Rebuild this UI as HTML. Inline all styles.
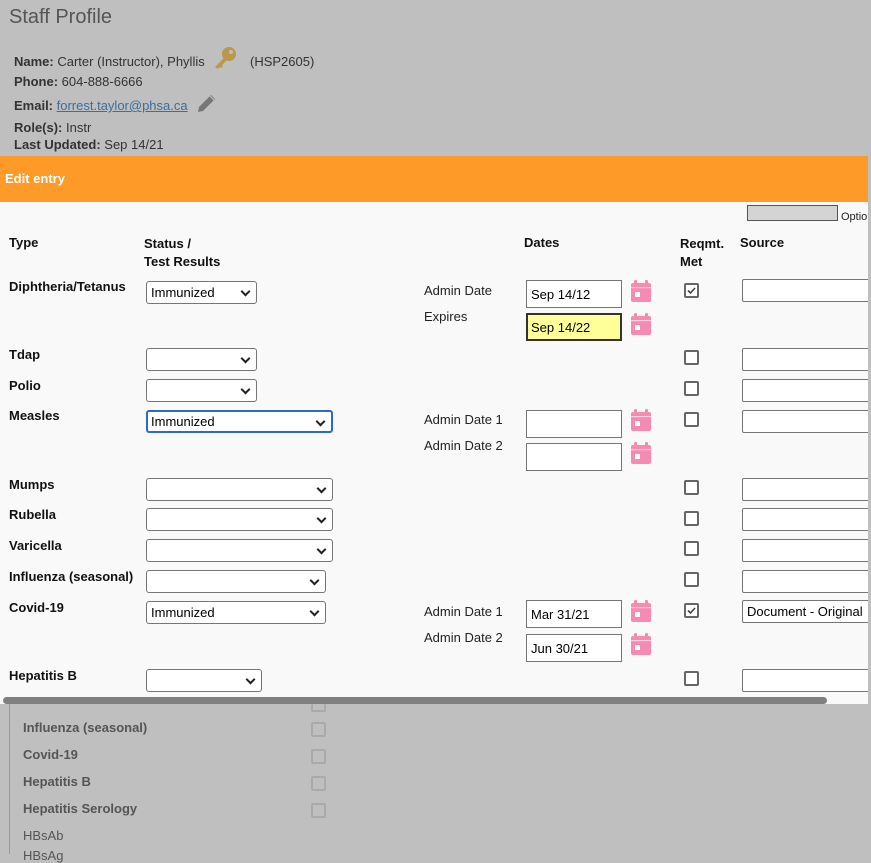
<!DOCTYPE html>
<html><head><style>
*{margin:0;padding:0;box-sizing:border-box}
body{width:871px;height:854px;overflow:hidden;background:#bfbfbf;font-family:"Liberation Sans",Arial,sans-serif;position:relative;color:#333}
.a{position:absolute;white-space:nowrap}
.t{font-size:13px}
.b{font-weight:bold;color:#111}
.sel{position:absolute;height:23px;background:#fff;border:1px solid #767676;border-radius:3px;font-size:13px;color:#000;padding:3px 4px;overflow:hidden}
.sel:after{content:"";position:absolute;right:7px;top:6px;width:5px;height:5px;border-right:2px solid #222;border-bottom:2px solid #222;transform:rotate(45deg)}
.src{position:absolute;left:742px;width:128px;height:23px;background:#fff;border:1px solid #767676;border-radius:2px;font-size:13px;color:#000;padding:3px 4px}
.di{position:absolute;left:526px;width:96px;height:28px;background:#fff;border:1px solid #767676;font-size:13px;color:#000;padding:6px 4px}
.cal{position:absolute;left:631px;width:20px;height:22px}
.cb{position:absolute;left:684px;width:15px;height:15px;border:2px solid #666;border-radius:2px;background:#fff}
.lab{position:absolute;left:424px;font-size:13px;color:#222}
.g{color:#555;font-size:13px;font-weight:bold}
.gc{position:absolute;left:311px;width:15px;height:15px;border:2px solid #aaa;border-radius:2px}
</style></head><body>
<div class="a" style="left:9px;top:6px;font-size:20px;color:#555">Staff Profile</div>
<div class="a t" style="left:14px;top:54px"><b>Name:</b> Carter (Instructor), Phyllis</div>
<svg class="a" style="left:212px;top:46px" width="26" height="24" viewBox="0 0 26 24"><circle cx="17" cy="8" r="7" fill="#b8984a"/><circle cx="19" cy="6" r="2" fill="#bfbfbf"/><path d="M12 12 L3 21 L6 23 L8 21 L9 22 L11 20 L10 19 L15 14Z" fill="#b8984a"/></svg>
<div class="a t" style="left:250px;top:54px">(HSP2605)</div>
<div class="a t" style="left:14px;top:74px"><b>Phone:</b> 604-888-6666</div>
<div class="a t" style="left:14px;top:98px"><b>Email:</b> <span style="color:#3a6f9c;text-decoration:underline">forrest.taylor@phsa.ca</span></div>
<svg class="a" style="left:196px;top:92px" width="22" height="22" viewBox="0 0 22 22"><path d="M3 15 L15 3 L19 7 L7 19 L2 20Z" fill="#777"/><path d="M14 4 L18 8" stroke="#bfbfbf" stroke-width="1.2"/></svg>
<div class="a t" style="left:14px;top:120px"><b>Role(s):</b> Instr</div>
<div class="a t" style="left:14px;top:137px"><b>Last Updated:</b> Sep 14/21</div>
<div class="a" style="left:0;top:156px;width:868px;height:46px;background:#fd9a28"></div>
<div class="a" style="left:5px;top:171px;color:#fff;font-weight:bold;font-size:13px">Edit entry</div>
<div class="a" style="left:0;top:202px;width:868px;height:502px;background:#f9f9f9;overflow:hidden">
</div>
<div class="a" style="left:747px;top:205px;width:91px;height:16px;background:#d4d4d4;border:1px solid #555"></div>
<div class="a" style="left:841px;top:211px;font-size:11px;color:#222">Optio</div>
<div class="a t b" style="left:9px;top:235px">Type</div>
<div class="a t b" style="left:144px;top:235px;line-height:18px">Status /<br>Test Results</div>
<div class="a t b" style="left:524px;top:235px">Dates</div>
<div class="a t b" style="left:680px;top:235px;line-height:18px">Reqmt.<br>Met</div>
<div class="a t b" style="left:740px;top:235px">Source</div>

<div class="a t b" style="left:9px;top:279px">Diphtheria/Tetanus</div>
<div class="a t b" style="left:9px;top:347px">Tdap</div>
<div class="a t b" style="left:9px;top:378px">Polio</div>
<div class="a t b" style="left:9px;top:408px">Measles</div>
<div class="a t b" style="left:9px;top:477px">Mumps</div>
<div class="a t b" style="left:9px;top:507px">Rubella</div>
<div class="a t b" style="left:9px;top:538px">Varicella</div>
<div class="a t b" style="left:9px;top:569px">Influenza (seasonal)</div>
<div class="a t b" style="left:9px;top:600px">Covid-19</div>
<div class="a t b" style="left:9px;top:668px">Hepatitis B</div>

<div class="sel" style="left:146px;top:281px;width:111px">Immunized</div>
<div class="sel" style="left:146px;top:348px;width:111px"></div>
<div class="sel" style="left:146px;top:379px;width:111px"></div>
<div class="sel" style="left:146px;top:410px;width:187px;border:2px solid #2a6acb;padding:2px 3px">Immunized</div>
<div class="sel" style="left:146px;top:478px;width:187px"></div>
<div class="sel" style="left:146px;top:508px;width:187px"></div>
<div class="sel" style="left:146px;top:539px;width:187px"></div>
<div class="sel" style="left:146px;top:570px;width:180px"></div>
<div class="sel" style="left:146px;top:601px;width:180px">Immunized</div>
<div class="sel" style="left:146px;top:669px;width:116px"></div>

<div class="lab" style="top:283px">Admin Date</div>
<div class="lab" style="top:309px">Expires</div>
<div class="lab" style="top:412px">Admin Date 1</div>
<div class="lab" style="top:438px">Admin Date 2</div>
<div class="lab" style="top:604px">Admin Date 1</div>
<div class="lab" style="top:630px">Admin Date 2</div>

<div class="di" style="top:280px">Sep 14/12</div>
<div class="di" style="top:313px;background:#ffff99;border:2px solid #333;padding:5px 3px">Sep 14/22</div>
<div class="di" style="top:410px"></div>
<div class="di" style="top:443px"></div>
<div class="di" style="top:600px">Mar 31/21</div>
<div class="di" style="top:634px">Jun 30/21</div>

<svg width="0" height="0" style="position:absolute"><defs><symbol id="c" viewBox="0 0 20 22"><rect x="0" y="3" width="20" height="19" rx="2" fill="#f68bb2"/><rect x="3" y="0" width="3" height="5" rx="1" fill="#f68bb2"/><rect x="14" y="0" width="3" height="5" rx="1" fill="#f68bb2"/><rect x="0" y="7" width="20" height="1.2" fill="#fbd0df"/><rect x="4" y="12" width="5" height="5" fill="#fff"/></symbol></defs></svg>
<svg class="cal" style="top:280px"><use href="#c"/></svg>
<svg class="cal" style="top:313px"><use href="#c"/></svg>
<svg class="cal" style="top:409px"><use href="#c"/></svg>
<svg class="cal" style="top:442px"><use href="#c"/></svg>
<svg class="cal" style="top:600px"><use href="#c"/></svg>
<svg class="cal" style="top:633px"><use href="#c"/></svg>

<div class="cb" style="top:283px"><svg width="11" height="11" style="position:absolute;left:0;top:0"><path d="M2 5.5 L4.5 8 L9 3" stroke="#444" stroke-width="1.6" fill="none"/></svg></div>
<div class="cb" style="top:350px"></div>
<div class="cb" style="top:381px"></div>
<div class="cb" style="top:412px"></div>
<div class="cb" style="top:480px"></div>
<div class="cb" style="top:511px"></div>
<div class="cb" style="top:541px"></div>
<div class="cb" style="top:572px"></div>
<div class="cb" style="top:603px"><svg width="11" height="11" style="position:absolute;left:0;top:0"><path d="M2 5.5 L4.5 8 L9 3" stroke="#444" stroke-width="1.6" fill="none"/></svg></div>
<div class="cb" style="top:671px"></div>

<div class="src" style="top:279px"></div>
<div class="src" style="top:348px"></div>
<div class="src" style="top:379px"></div>
<div class="src" style="top:410px"></div>
<div class="src" style="top:478px"></div>
<div class="src" style="top:508px"></div>
<div class="src" style="top:539px"></div>
<div class="src" style="top:570px"></div>
<div class="src" style="top:600px">Document - Original</div>
<div class="src" style="top:669px"></div>
<div class="a" style="left:868px;top:202px;width:3px;height:502px;background:#bfbfbf"></div>

<div class="a t b" style="left:9px;top:697px;height:7px;overflow:hidden;line-height:14px">Hepatitis Serology</div>
<div class="a" style="left:3px;top:697px;width:824px;height:7px;background:#808080;border-radius:4px"></div>
<div class="a" style="left:0;top:704px;width:871px;height:150px;background:#bfbfbf"></div>
<div class="a" style="left:9px;top:704px;width:1px;height:150px;background:#999"></div>
<div class="a g" style="left:23px;top:720px">Influenza (seasonal)</div>
<div class="a g" style="left:23px;top:747px">Covid-19</div>
<div class="a g" style="left:23px;top:774px">Hepatitis B</div>
<div class="a g" style="left:23px;top:801px">Hepatitis Serology</div>
<div class="a" style="left:23px;top:828px;font-size:13px;color:#555">HBsAb</div>
<div class="a" style="left:23px;top:848px;font-size:13px;color:#555">HBsAg</div>
<div class="gc" style="top:704px;height:8px;border-top:none"></div>
<div class="gc" style="top:722px"></div>
<div class="gc" style="top:749px"></div>
<div class="gc" style="top:776px"></div>
<div class="gc" style="top:803px"></div>
</body></html>
